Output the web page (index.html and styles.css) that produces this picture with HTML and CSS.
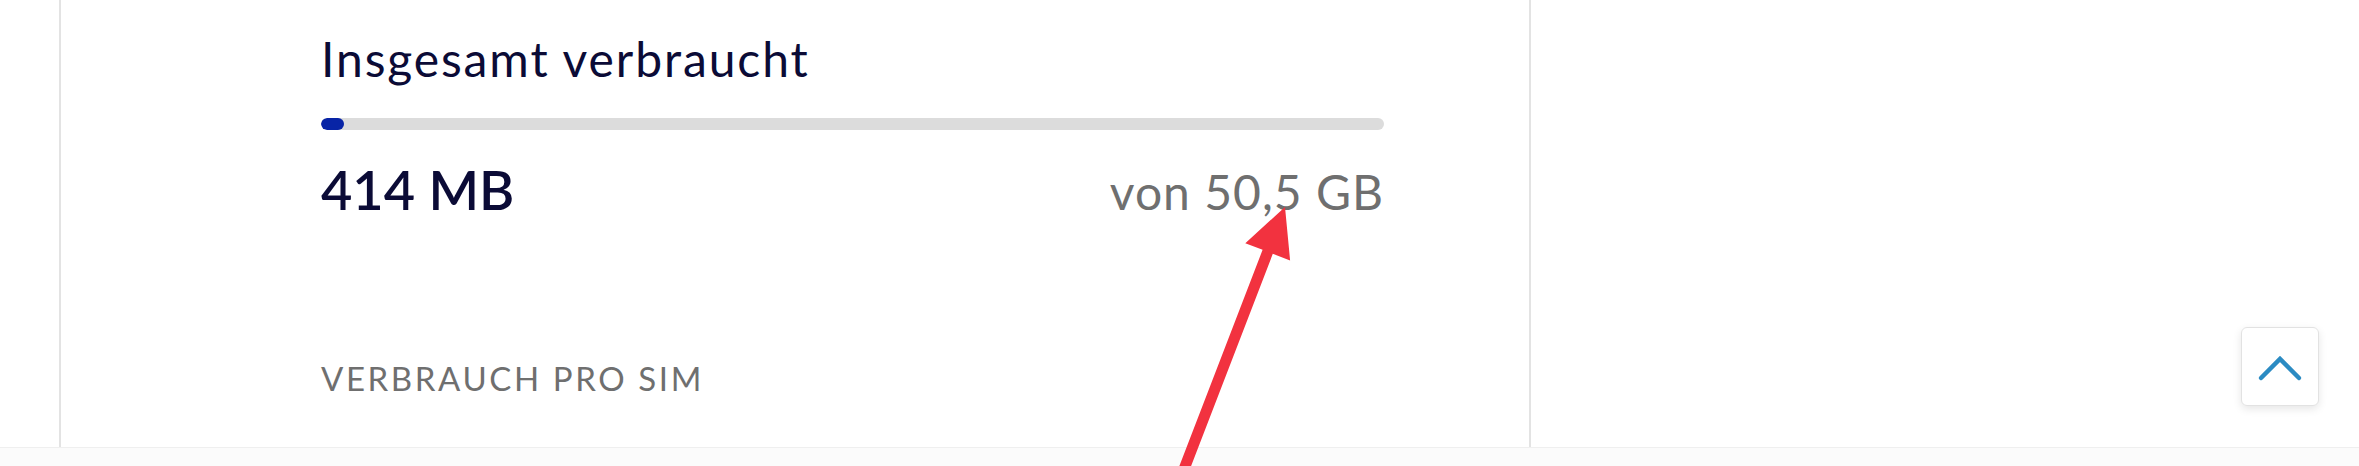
FILE: index.html
```html
<!DOCTYPE html>
<html lang="de">
<head>
<meta charset="utf-8">
<title>Verbrauch</title>
<link rel="stylesheet" href="styles.css">
</head>
<body>
<div class="page">
  <main class="card">
    <section class="usage">
      <h2 class="usage-title">Insgesamt verbraucht</h2>
      <div class="bar"><div class="bar-fill" style="width: 2.2%"></div></div>
      <div class="usage-values">
        <span class="used">414 MB</span>
        <span class="total">von 50,5 GB</span>
      </div>
      <h3 class="section-label">VERBRAUCH PRO SIM</h3>
    </section>
  </main>
  <aside class="side"></aside>
</div>
<footer class="bottom-strip"></footer>

<button class="to-top" aria-label="Nach oben">
  <svg width="76" height="77" viewBox="0 0 76 77"><polyline points="19,50 38,31 57,50" fill="none" stroke="#2b8bc3" stroke-width="4.5" stroke-linecap="round" stroke-linejoin="miter"/></svg>
</button>

<svg class="annotation" width="2359" height="466" viewBox="0 0 2359 466">
  <polygon points="1285,207 1290.1,260.4 1272.8,253.8 1181.1,492 1170.9,488 1262.6,249.8 1245.3,243.2" fill="#f2323f"/>
</svg>
</body>
</html>
```

FILE: styles.css
```css
html, body {
  margin: 0;
  padding: 0;
  background: #ffffff;
  font-family: "Lato", "Liberation Sans", sans-serif;
  overflow: hidden;
}

.page {
  display: flex;
  height: 447px;
}

.card {
  margin-left: 59px;
  width: 1468px;
  border-left: 2px solid #e3e3e3;
  border-right: 2px solid #e3e3e3;
  box-sizing: content-box;
}

.usage {
  padding: 30px 145px 0 260px;
}

.usage-title {
  margin: 0;
  font-size: 48px;
  line-height: 58px;
  font-weight: 400;
  letter-spacing: 1.9px;
  color: #0b0b36;
}

.bar {
  margin-top: 30px;
  height: 12px;
  border-radius: 6px;
  background: #dcdcdc;
  overflow: hidden;
}

.bar-fill {
  height: 100%;
  border-radius: 6px;
  background: #0824a6;
}

.usage-values {
  margin-top: 28px;
  display: flex;
  justify-content: space-between;
  align-items: baseline;
  line-height: 64px;
}

.used {
  font-size: 54px;
  font-weight: 600;
  color: #0b0b36;
}

.total {
  font-size: 48px;
  font-weight: 400;
  letter-spacing: 1px;
  color: #6f6f6f;
}

.section-label {
  margin: 134px 0 0;
  font-size: 33px;
  line-height: 40px;
  font-weight: 400;
  letter-spacing: 2.6px;
  color: #6f6f6f;
}

.side {
  flex: 1;
}

.bottom-strip {
  height: 18px;
  border-top: 1px solid #efefef;
  background: #fbfbfb;
}

.to-top {
  position: fixed;
  right: 40px;
  bottom: 60px;
  width: 78px;
  height: 79px;
  padding: 0;
  border: 1px solid #e2e2e2;
  border-radius: 6px;
  background: #ffffff;
  box-shadow: 0 3px 8px rgba(0, 0, 0, 0.10);
  display: flex;
  align-items: center;
  justify-content: center;
}

.annotation {
  position: absolute;
  left: 0;
  top: 0;
  pointer-events: none;
}
```
